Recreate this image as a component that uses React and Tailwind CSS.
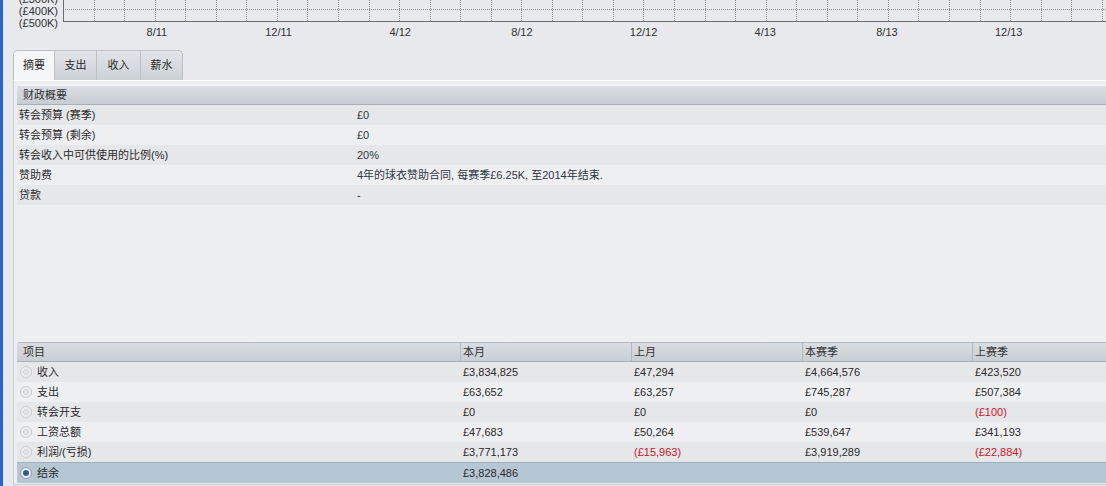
import React from 'react';

const font = { fontFamily: '"Liberation Sans", "Noto Sans CJK SC", Arial, sans-serif' };

const summary = [
    ['转会预算 (赛季)', '£0'],
    ['转会预算 (剩余)', '£0'],
    ['转会收入中可供使用的比例(%)', '20%'],
    ['赞助费', '4年的球衣赞助合同, 每赛季£6.25K, 至2014年结束.'],
    ['贷款', '-'],
];

const finances = [
    { name: '收入', cells: ['£3,834,825', '£47,294', '£4,664,576', '£423,520'] },
    { name: '支出', cells: ['£63,652', '£63,257', '£745,287', '£507,384'] },
    { name: '转会开支', cells: ['£0', '£0', '£0', '(£100)'] },
    { name: '工资总额', cells: ['£47,683', '£50,264', '£539,647', '£341,193'] },
    { name: '利润/(亏损)', cells: ['£3,771,173', '(£15,963)', '£3,919,289', '(£22,884)'] },
    { name: '结余', cells: ['£3,828,486', '', '', ''], selected: true },
];

const months = ['8/11', '12/11', '4/12', '8/12', '12/12', '4/13', '8/13', '12/13'];
const tabs = [
    { label: '摘要', w: 'w-[42px]', active: true },
    { label: '支出', w: 'w-[42px]' },
    { label: '收入', w: 'w-[44px]' },
    { label: '薪水', w: 'w-[42px]' },
];

const Radio = ({ on }) => (
    <svg width="12" height="12" viewBox="0 0 12 12" className="shrink-0">
        <circle cx="6" cy="6" r="5.5" fill="#eceef0" stroke={on ? '#8d9aa8' : '#c9ccd0'} />
        {on ? (
            <circle cx="6" cy="6" r="3" fill="#2f5b9a" />
        ) : (
            <circle cx="6" cy="6" r="2.5" fill="#e6e8ea" stroke="#cfd2d5" />
        )}
    </svg>
);

const Chart = () => {
    const lines = [];
    for (let k = 1; k <= 34; k++) lines.push(k * 30.55);
    return (
        <div className="flex">
            <div className="w-[60px] shrink-0 pr-[5px] text-right leading-[12px] -mt-[7px] text-[#333]">
                <div>(£300K)</div>
                <div>(£400K)</div>
                <div>(£500K)</div>
            </div>
            <div className="flex flex-col">
                <svg width="1043" height="22" className="shrink-0">
                    <line x1="0" y1="9.5" x2="1043" y2="9.5" stroke="#8a8a8a" strokeDasharray="1 1" />
                    {lines.map((x) => (
                        <line key={x} x1={Math.round(x) + 0.5} y1="0" x2={Math.round(x) + 0.5} y2="21" stroke="#8a8a8a" strokeDasharray="1 1" />
                    ))}
                    <line x1="0.5" y1="0" x2="0.5" y2="22" stroke="#6b6b6b" />
                    <line x1="0" y1="21.5" x2="1043" y2="21.5" stroke="#6b6b6b" />
                </svg>
                {/* month labels under the axis */}
                <div className="h-[20px] flex ml-[33px] leading-[20px] text-[#333]">
                    {months.map((m) => (
                        <div key={m} className="w-[121.7px] shrink-0 text-center">{m}</div>
                    ))}
                </div>
            </div>
        </div>
    );
};

export default function App() {
    return (
        <div style={font} className="w-[1106px] h-[486px] overflow-hidden flex bg-[#e7e9ec] text-[11px] text-[#2a2a2a]">
            <div className="w-[3px] shrink-0 bg-[#2b63d9]" />
            <div className="flex-1 min-w-0 flex flex-col">
                <Chart />

                {/* tabs */}
                <div className="mt-[8px] ml-[10px] flex h-[30px]">
                    {tabs.map((t, i) => (
                        <div
                            key={t.label}
                            className={`${t.w} flex items-center justify-center border-t border-r border-[#bcc1c6] ${i === 0 ? 'border-l rounded-tl-[5px]' : ''} ${i === tabs.length - 1 ? 'rounded-tr-[5px]' : ''} ${t.active ? 'bg-[#f5f6f7]' : 'bg-gradient-to-b from-[#e2e5e8] to-[#ccd1d6]'}`}
                        >
                            {t.label}
                        </div>
                    ))}
                </div>

                {/* panel */}
                <div className="ml-[10px] mb-[1px] flex-1 flex flex-col bg-[#eceef0] border-t border-t-[#fbfcfc] border-l border-b border-[#c9cdd1] pl-[3px] pt-[4px] pb-[1px]">
                    <div className="h-[20px] flex items-center pl-[6px] bg-gradient-to-b from-[#dadee2] to-[#c8cdd3] border-t border-t-[#f4f5f6] border-b border-b-[#a9afb5] text-[#333]">
                        财政概要
                    </div>
                    {summary.map(([label, value], i) => (
                        <div key={label} className={`h-[20px] grid grid-cols-[338px_1fr] items-center ${i % 2 === 0 ? 'bg-[#e6e7e9]' : 'bg-[#eeeff1]'}`}>
                            <div className="pl-[2px]">{label}</div>
                            <div className="pl-[2px] text-[#2e3742]">{value}</div>
                        </div>
                    ))}

                    <div className="mt-auto border-t border-[#b4b9be] rounded-tl-[3px] overflow-hidden">
                        <div className="h-[19px] grid grid-cols-[443px_171px_171px_170px_1fr] bg-gradient-to-b from-[#dadee2] to-[#c9ced4] border-b border-[#aab0b6] text-[#333]">
                            <div className="pl-[6px] flex items-center">项目</div>
                            {['本月', '上月', '本赛季', '上赛季'].map((h) => (
                                <div key={h} className="pl-[2px] flex items-center border-l border-[#b3b8be]">{h}</div>
                            ))}
                        </div>
                        {finances.map((row, i) => (
                            <div
                                key={row.name}
                                className={`grid grid-cols-[443px_171px_171px_170px_1fr] items-center ${row.selected ? 'h-[21px] bg-[#b5c7d5] border-t border-[#9fb1c0]' : i % 2 === 0 ? 'h-[20px] bg-[#e6e7e9]' : 'h-[20px] bg-[#eeeff1]'}`}
                            >
                                <div className="flex items-center gap-[5px] pl-[3px]">
                                    <Radio on={row.selected} />
                                    <span>{row.name}</span>
                                </div>
                                {row.cells.map((c, j) => (
                                    <div key={j} className={`pl-[3px] ${c.startsWith('(') ? 'text-[#d3121c]' : ''}`}>{c}</div>
                                ))}
                            </div>
                        ))}
                    </div>
                </div>
            </div>
        </div>
    );
}
